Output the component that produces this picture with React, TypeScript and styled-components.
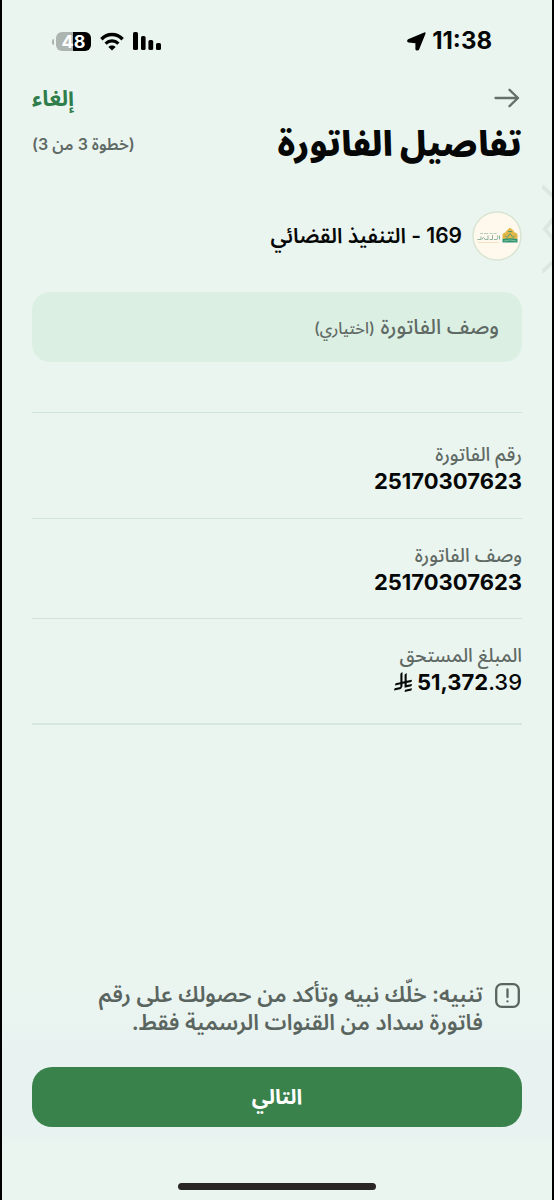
import React from "react";
import styled, { createGlobalStyle } from "styled-components";

const GlobalStyle = createGlobalStyle`
  *, *::before, *::after { box-sizing: border-box; }
  body { margin: 0; background: #000; }
  button, input { font: inherit; }
`;

const Screen = styled.main`
  position: relative;
  display: flex;
  flex-direction: column;
  min-height: 100vh;
  margin: 0 2px;
  padding: 0 30px;
  overflow: hidden;
  background: #ebf5f0;
  color: #060807;
  font-family: Inter, "Noto Sans Arabic", "Liberation Sans", sans-serif;
`;

const StatusBar = styled.div`
  display: flex;
  align-items: center;
  justify-content: space-between;
  padding: 28px 30px 0 24px;
  height: 54px;
`;

const StatusGroup = styled.div<{ $gap: number }>`
  display: flex;
  align-items: center;
  gap: ${(p) => p.$gap}px;
`;

const Clock = styled.time`
  font-size: 24px;
  line-height: 26px;
  font-weight: 700;
`;

const Battery = styled.div`
  position: relative;
  display: flex;
  align-items: center;
  justify-content: center;
  width: 35px;
  height: 19px;
  border-radius: 6px;
  background: linear-gradient(to right, #adb5b1 50%, #000 50%);
  color: #fff;
  font-size: 18px;
  line-height: 19px;
  font-weight: 700;

  &::before {
    content: "";
    position: absolute;
    left: -4px;
    top: 7px;
    width: 2px;
    height: 6px;
    border-radius: 2px 0 0 2px;
    background: #adb5b1;
  }
`;

const NavRow = styled.nav`
  display: flex;
  align-items: center;
  justify-content: space-between;
  height: 32px;
  margin-top: 28px;
  padding-right: 2px;
`;

const PlainButton = styled.button`
  display: flex;
  align-items: center;
  padding: 0;
  border: 0;
  background: none;
  color: #2f7d4a;
  font-size: 22px;
  line-height: 32px;
  font-weight: 700;
  cursor: pointer;
`;

const TitleRow = styled.header`
  display: flex;
  align-items: center;
  justify-content: space-between;
  height: 60px;
`;

const Title = styled.h1`
  margin: 0;
  font-size: 34px;
  line-height: 60px;
  font-weight: 900;
  white-space: nowrap;
`;

const Step = styled.span`
  color: #5f6a65;
  font-size: 16px;
  line-height: 24px;
  font-weight: 600;
  white-space: nowrap;
`;

const Biller = styled.section`
  display: flex;
  align-items: center;
  gap: 10px;
  height: 50px;
  margin-top: 37px;
`;

const BillerName = styled.h2`
  margin: 0;
  font-size: 21px;
  line-height: 30px;
  font-weight: 600;
`;

const Field = styled.label`
  display: flex;
  align-items: center;
  gap: 6px;
  height: 70px;
  margin-top: 31px;
  padding: 0 23px;
  border-radius: 18px;
  background: #dcefe3;
  color: #5f6a65;
  font-size: 21px;
  line-height: 28px;
  font-weight: 500;
  white-space: nowrap;
`;

const Hint = styled.small`
  font-size: 16px;
`;

const FieldInput = styled.input`
  flex: 1;
  min-width: 0;
  padding: 0;
  border: 0;
  outline: 0;
  background: none;
  color: #060807;
`;

const Details = styled.dl`
  margin: 50px 0 0;
  border-top: 1px solid #cfe3d8;
  border-bottom: 2px solid #d3e8de;
  padding: 5px 0;
`;

const Detail = styled.div`
  height: 100px;
  padding-top: 24px;

  & + & {
    border-top: 1px solid #cfe3d8;
  }
`;

const DetailLabel = styled.dt`
  color: #5f6a65;
  font-size: 19px;
  line-height: 26px;
  font-weight: 500;
`;

const DetailValue = styled.dd`
  display: flex;
  align-items: center;
  direction: ltr;
  justify-content: flex-end;
  gap: 5px;
  margin: 0;
  font-size: 22px;
  line-height: 26px;
  font-weight: 700;
`;

const Fraction = styled.span`
  font-weight: 500;
`;

const Footer = styled.footer`
  margin: auto -30px 0;
  padding: 0 30px;
  background: linear-gradient(to bottom, #ebf5f0, #e8f2f0 30%, #e8f2f0 70%, #ebf5f0 78%);
`;

const Notice = styled.div`
  display: flex;
  align-items: flex-start;
  gap: 12px;
  padding: 0 2px 0 50px;
  color: #5a6560;
`;

const NoticeIcon = styled.svg`
  margin-top: 3px;
`;

const NoticeText = styled.p`
  flex: 1;
  margin: 0;
  font-size: 22px;
  line-height: 28px;
  font-weight: 600;
`;

const NextButton = styled.button`
  display: block;
  width: 100%;
  height: 60px;
  margin-top: 31px;
  border: 0;
  border-radius: 20px;
  background: #3a824c;
  color: #fff;
  font-size: 21px;
  line-height: 28px;
  font-weight: 700;
  cursor: pointer;
`;

const HomeIndicator = styled.div`
  width: 198px;
  height: 7px;
  margin: 56px auto 0;
  border-radius: 4px;
  background: #2a2626;
`;

const BottomInset = styled.div`
  height: 10px;
`;

const EdgePattern = styled.svg`
  position: absolute;
  top: 184px;
  right: 0;
`;

const WifiIcon = () => (
  <svg width="24" height="19" viewBox="0 0 24 19" fill="none" stroke="#000" strokeWidth="3.4" aria-hidden="true">
    <path d="M1.4 7.2C7.4 1 16.6 1 22.6 7.2" />
    <path d="M5.6 11.6c3.7-3.6 9.1-3.6 12.8 0" strokeWidth="3.2" />
    <path d="M12 18.6l-3.6-3.7c2-1.8 5.2-1.8 7.2 0z" fill="#000" stroke="none" />
  </svg>
);

const SignalIcon = () => (
  <svg width="28" height="19" viewBox="0 0 28 19" fill="#000" aria-hidden="true">
    <rect x="0" y="0" width="5" height="18" rx="1.6" />
    <rect x="8" y="4" width="4.6" height="14" rx="1.6" />
    <rect x="15.4" y="8" width="4.8" height="10" rx="1.6" />
    <rect x="23" y="11" width="5" height="7" rx="1.6" />
  </svg>
);

const LocationIcon = () => (
  <svg width="19" height="19" viewBox="0 0 19 19" fill="#000" aria-hidden="true">
    <path d="M17.2.4c1-.4 1.7.4 1.3 1.400l-6.400 15.800c-.5 1.300-3.600 1.200-3.700-.4L8.400 11.200 1.600 10.600C0 10.400-.4 7.900 1.100 7.200z" />
  </svg>
);

const ArrowIcon = () => (
  <svg width="26" height="20" viewBox="0 0 26 20" fill="none" stroke="#66706b" strokeWidth="2.3" strokeLinecap="round" strokeLinejoin="round" aria-hidden="true">
    <path d="M1.500 10H24M15.500 1.800 24 10l-8.500 8.200" />
  </svg>
);

const BillerLogo = () => (
  <svg width="50" height="50" viewBox="0 0 50 50" aria-hidden="true">
    <circle cx="25" cy="25" r="24" fill="#fff8ec" stroke="#d9e5d4" strokeWidth="1.500" />
    <g fill="none" stroke="#8fb5a2" strokeWidth="1">
      <path d="M8 22.500h3m1 0h4m1.500 0h3m1 0h3" strokeWidth=".9" opacity=".7" />
      <path d="M5.500 28.500h3.500v-3M10 28.500q1.500-4 3 0h3v-4M17.500 28.500h3v-4.500M22 28.500h3q1.500-2 .5-4M27.500 24.500v4" />
      <path d="M6 31.500h21" stroke="#f3e2c0" />
    </g>
    <path d="M30.500 28v-4q0-2 3-2.500 1-3 3-3.500l1.500-1.500 1.500 1.500q2 .5 3 3.500 3 .5 3 2.500v4z" fill="#e2b748" />
    <path d="M33 24.500l2 2 3-4 3 4 2-2M36 20.500h4" fill="none" stroke="#5c9a72" strokeWidth="1" />
    <path d="M30.500 28q7.500-1.500 15 0v3.500h-15z" fill="#2e9678" />
    <path d="M32 30q6-2 12 0" fill="none" stroke="#a4cf9b" strokeWidth=".7" />
  </svg>
);

const RiyalIcon = () => (
  <svg width="18" height="20" viewBox="0 0 1124.14 1256.39" fill="#060807" role="img" aria-label="ريال">
    <path d="M699.62 1113.02c-20.060 44.480-33.320 92.750-38.400 143.370l424.510-90.240c20.060-44.470 33.310-92.750 38.400-143.370z" />
    <path d="M1085.730 895.800c20.060-44.470 33.320-92.750 38.400-143.370l-330.680 70.330v-135.200l292.270-62.110c20.060-44.470 33.320-92.750 38.400-143.370l-330.680 70.270V66.130c-50.670 28.450-95.670 66.320-132.250 110.990v403.350l-132.250 28.110V0c-50.670 28.440-95.670 66.320-132.250 110.990v525.690l-295.910 62.880c-20.060 44.470-33.330 92.750-38.420 143.370l334.330-71.050v170.260l-358.300 76.140c-20.060 44.470-33.320 92.750-38.400 143.370l375.040-79.700c30.530-6.350 56.770-24.400 73.830-49.240l68.780-101.970c7.140-10.570 11.300-23.290 11.300-36.990v-149.980l132.250-28.110v270.400z" />
  </svg>
);

const AlertIcon = () => (
  <NoticeIcon width="25" height="25" viewBox="0 0 25 25" fill="none" stroke="#5a6560" strokeWidth="2.300" strokeLinecap="round" aria-hidden="true">
    <rect x="1.200" y="1.200" width="22.600" height="22.600" rx="5.500" />
    <path d="M12.500 6.500v7.500M12.500 18.300v.1" />
  </NoticeIcon>
);

export default function App() {
  return (
    <>
      <GlobalStyle />
      <Screen dir="rtl" lang="ar">
        <EdgePattern width="10" height="90" viewBox="0 0 10 90" fill="none" stroke="#dbe8e1" strokeWidth="4" aria-hidden="true">
          <path d="M0 2l11 10M12 34L3 45l9 11M0 88l11-10" />
        </EdgePattern>

        <StatusBar dir="ltr">
          <StatusGroup $gap={9}>
            <Battery>48</Battery>
            <WifiIcon />
            <SignalIcon />
          </StatusGroup>
          <StatusGroup $gap={6}>
            <LocationIcon />
            <Clock>11:38</Clock>
          </StatusGroup>
        </StatusBar>

        <NavRow>
          <PlainButton type="button" aria-label="رجوع">
            <ArrowIcon />
          </PlainButton>
          <PlainButton type="button">إلغاء</PlainButton>
        </NavRow>

        <TitleRow>
          <Title>تفاصيل الفاتورة</Title>
          <Step>(خطوة 3 من 3)</Step>
        </TitleRow>

        <Biller>
          <BillerLogo />
          <BillerName>169 - التنفيذ القضائي</BillerName>
        </Biller>

        <Field>
          <span>
            وصف الفاتورة <Hint>(اختياري)</Hint>
          </span>
          <FieldInput type="text" name="description" />
        </Field>

        <Details>
          <Detail>
            <DetailLabel>رقم الفاتورة</DetailLabel>
            <DetailValue>25170307623</DetailValue>
          </Detail>
          <Detail>
            <DetailLabel>وصف الفاتورة</DetailLabel>
            <DetailValue>25170307623</DetailValue>
          </Detail>
          <Detail>
            <DetailLabel>المبلغ المستحق</DetailLabel>
            <DetailValue>
              <RiyalIcon />
              <span>
                51,372<Fraction>.39</Fraction>
              </span>
            </DetailValue>
          </Detail>
        </Details>

        <Footer>
          <Notice>
            <AlertIcon />
            <NoticeText>تنبيه: خلّك نبيه وتأكد من حصولك على رقم فاتورة سداد من القنوات الرسمية فقط.</NoticeText>
          </Notice>
          <NextButton type="button">التالي</NextButton>
          <HomeIndicator />
          <BottomInset />
        </Footer>
      </Screen>
    </>
  );
}
